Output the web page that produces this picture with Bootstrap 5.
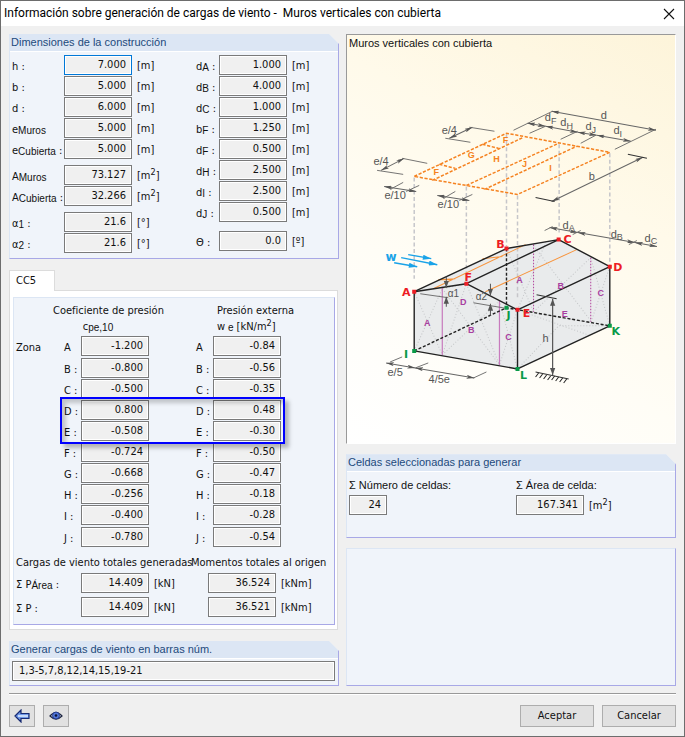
<!DOCTYPE html>
<html lang="es">
<head>
<meta charset="utf-8">
<meta name="viewport" content="width=device-width, initial-scale=1">
<title>Información sobre generación de cargas de viento</title>
<link href="https://cdn.jsdelivr.net/npm/bootstrap@5.3.0/dist/css/bootstrap.min.css" rel="stylesheet">
<style>
  :root { --ui: "DejaVu Sans Condensed", "DejaVu Sans", sans-serif; --head: "Liberation Sans", Arial, sans-serif; }
  body { background: #f0f0f0; color: #111; font-family: var(--ui); font-size: 11px; line-height: 16px; }
  .win { border: 1px solid #6d6d6d; }
  .title-bar { height: 25px; padding: 0 9px 0 3px; font: 12px/25px Roboto, sans-serif; color: #000; }
  .close-btn { width: 12px; height: 12px; line-height: 0; }
  .content-area { display: grid; grid-template-columns: 1fr 1fr; gap: 7px; padding: 8px 8px 7px; }
  .pane { background: #f0f4fa; border: 1px solid #dce6f4; border-right-color: #a8a8e6; border-bottom-color: #a8a8e6; }
  .pane.cut { clip-path: polygon(0 0, calc(100% - 10px) 0, 100% 10px, 100% 100%, 0 100%); }
  .pane-head { height: 17px; margin: 0; padding-left: 1px; background: #dce6f4; border-bottom: 1px solid #fff; font: 11px/15px var(--head); color: #1d4a7c; }
  .lines { display: grid; row-gap: 1px; align-content: start; }
  .line { display: flex; height: 20px; align-items: center; white-space: nowrap; }
  .line label { flex: none; width: 52px; padding-top: 3px; }
  .short .line label { width: 23px; }
  .zone .line label { width: 17px; }
  .total .line label { width: 65px; }
  .moment { padding-left: 2px; }
  .sb { font: 10px/12px var(--head); position: relative; top: 1px; }
  .num { flex: none; width: 68px; height: 20px; padding: 0 5px 1px 4px; border: 1px solid #7a7a7a; border-radius: 0; box-shadow: inset 0 0 0 1px #fff; background: #f0f0f0; color: #111; text-align: right; font: 11px/16px var(--ui); }
  .num.active { border-color: #0078d7; }
  .num.mini { width: 38px; }
  .num.full { width: 100%; padding-left: 6px; text-align: left; }
  .unit { margin-left: 5px; padding-top: 2px; }
  .unit sup, .hd sup { font-size: 9px; top: -4px; line-height: 0; }
  .set-b { margin-top: 5px; }
  .set-c { margin-top: 8px; }
  .dims { display: grid; grid-template-columns: 184px 1fr; padding: 3px 2px; min-height: 206px; }
  .bars { padding: 2px 3px 4px 2px; }
  .tab-cc { width: 46px; height: 21px; margin-bottom: -1px; border: 1px solid #dcdcdc; border-bottom: 0; background: #fff; font: 11px/18px var(--ui); color: #111; padding: 0 0 0 6px; text-align: left; position: relative; }
  .tab-area { padding-top: 11px; }
  .tab-body { background: #fff; border: 1px solid #dcdcdc; margin-right: 1px; padding: 6px 2px 4px 3px; }
  .tab-body .pane { padding: 5px 0 7px 2px; }
  .coef { display: grid; grid-template-columns: 48px 132px 1fr; }
  .zone .line:nth-child(2), .zone .line:last-child { margin-top: 1px; }
  .hd { height: 33px; line-height: 16px; white-space: nowrap; }
  .hd-coef { width: 90px; margin-left: -11px; text-align: center; }
  .hd-press { width: 80px; margin-left: 21px; }
  .zone-box { position: absolute; left: 46px; top: 99px; width: 225px; height: 47px; border: 2px solid #00f; box-shadow: 4px 4px 4px rgba(0,0,0,.25), inset 4px 4px 4px rgba(0,0,0,.2); pointer-events: none; }
  .totals { display: grid; grid-template-columns: 173px 1fr; margin-top: 6px; line-height: 20px; white-space: nowrap; }
  .totals .lines { row-gap: 4px; }
  .moment .lines { padding-left: 17px; }
  .scene { background: linear-gradient(30deg, #fff 0%, #fffdf6 35%, #fffaea 65%, #fdf4da 100%); border: 1px solid #999; border-right-color: #fff; border-bottom-color: #fff; }
  .scene h2 { font: 11px/16px var(--head); margin: 0; padding-left: 2px; }
  .below { margin-top: 10px; }
  .cells { display: grid; grid-template-columns: 167px 1fr; padding: 4px 2px; min-height: 65px; font-family: var(--head); }
  .cells .cap { display: block; line-height: 19px; }
  .cells .unit { font-family: var(--ui); }
  .foot { border-top: 1px solid #999; box-shadow: inset 0 1px #fff; margin: 0 8px; padding: 11px 0 9px; }
  .btn-win { height: 22px; border: 1px solid #adadad; border-radius: 0; background: #e1e1e1; color: #111; padding: 0; font: 11px/18px var(--ui); }
  .btn-win.wide { width: 74px; }
  .btn-win.tool { width: 26px; line-height: 0; }
</style>
<script src="https://cdn.jsdelivr.net/npm/bootstrap@5.3.0/dist/js/bootstrap.bundle.min.js"></script>
</head>
<body>
<div class="win d-flex flex-column min-vh-100">
  <header class="title-bar bg-white d-flex align-items-center justify-content-between">
    <span>Información sobre generación de cargas de viento -&nbsp; Muros verticales con cubierta</span>
    <button class="close-btn btn p-0 border-0" aria-label="Cerrar"><svg class="d-block" width="12" height="12" viewBox="0 0 12 12" stroke="#111" stroke-width="1.1"><path d="M1 1l10 10M11 1L1 11"/></svg></button>
  </header>

  <main class="content-area flex-grow-1">
    <div class="d-flex flex-column">
      <section class="pane cut">
        <h2 class="pane-head">Dimensiones de la construcción</h2>
        <div class="dims">
          <div class="lines">
            <div class="line"><label for="h">h :</label><input id="h" class="num active" value="7.000" readonly><span class="unit">[m]</span></div>
            <div class="line"><label for="b">b :</label><input id="b" class="num" value="5.000" readonly><span class="unit">[m]</span></div>
            <div class="line"><label for="d">d :</label><input id="d" class="num" value="6.000" readonly><span class="unit">[m]</span></div>
            <div class="line"><label for="em">e<span class="sb">Muros</span></label><input id="em" class="num" value="5.000" readonly><span class="unit">[m]</span></div>
            <div class="line"><label for="ec">e<span class="sb">Cubierta</span> :</label><input id="ec" class="num" value="5.000" readonly><span class="unit">[m]</span></div>
            <div class="line set-b"><label for="am">A<span class="sb">Muros</span></label><input id="am" class="num" value="73.127" readonly><span class="unit">[m<sup>2</sup>]</span></div>
            <div class="line"><label for="ac">A<span class="sb">Cubierta</span> :</label><input id="ac" class="num" value="32.266" readonly><span class="unit">[m<sup>2</sup>]</span></div>
            <div class="line set-b"><label for="a1">α<span class="sb">1</span> :</label><input id="a1" class="num" value="21.6" readonly><span class="unit">[°]</span></div>
            <div class="line"><label for="a2">α<span class="sb">2</span> :</label><input id="a2" class="num" value="21.6" readonly><span class="unit">[°]</span></div>
          </div>
          <div class="lines short">
            <div class="line"><label for="dA">d<span class="sb">A</span> :</label><input id="dA" class="num" value="1.000" readonly><span class="unit">[m]</span></div>
            <div class="line"><label for="dB">d<span class="sb">B</span> :</label><input id="dB" class="num" value="4.000" readonly><span class="unit">[m]</span></div>
            <div class="line"><label for="dC">d<span class="sb">C</span> :</label><input id="dC" class="num" value="1.000" readonly><span class="unit">[m]</span></div>
            <div class="line"><label for="bF">b<span class="sb">F</span> :</label><input id="bF" class="num" value="1.250" readonly><span class="unit">[m]</span></div>
            <div class="line"><label for="dF">d<span class="sb">F</span> :</label><input id="dF" class="num" value="0.500" readonly><span class="unit">[m]</span></div>
            <div class="line"><label for="dH">d<span class="sb">H</span> :</label><input id="dH" class="num" value="2.500" readonly><span class="unit">[m]</span></div>
            <div class="line"><label for="dI">d<span class="sb">I</span> :</label><input id="dI" class="num" value="2.500" readonly><span class="unit">[m]</span></div>
            <div class="line"><label for="dJ">d<span class="sb">J</span> :</label><input id="dJ" class="num" value="0.500" readonly><span class="unit">[m]</span></div>
            <div class="line set-c"><label for="th">Θ :</label><input id="th" class="num" value="0.0" readonly><span class="unit">[º]</span></div>
          </div>
        </div>
      </section>

      <div class="tab-area">
        <button class="tab-cc d-block" role="tab" aria-selected="true">CC5</button>
        <div class="tab-body">
          <section class="pane position-relative">
            <div class="coef">
              <div><div class="hd"></div><div class="line pt-1">Zona</div></div>
              <div>
                <div class="hd hd-coef">Coeficiente de presión<br>c<span class="sb">pe,10</span></div>
                <div class="lines zone">
                  <div class="line"><label for="cA">A</label><input id="cA" class="num" value="-1.200" readonly></div>
                  <div class="line"><label for="cB">B :</label><input id="cB" class="num" value="-0.800" readonly></div>
                  <div class="line"><label for="cC">C :</label><input id="cC" class="num" value="-0.500" readonly></div>
                  <div class="line"><label for="cD">D :</label><input id="cD" class="num" value="0.800" readonly></div>
                  <div class="line"><label for="cE">E :</label><input id="cE" class="num" value="-0.508" readonly></div>
                  <div class="line"><label for="cF">F :</label><input id="cF" class="num" value="-0.724" readonly></div>
                  <div class="line"><label for="cG">G :</label><input id="cG" class="num" value="-0.668" readonly></div>
                  <div class="line"><label for="cH">H :</label><input id="cH" class="num" value="-0.256" readonly></div>
                  <div class="line"><label for="cI">I :</label><input id="cI" class="num" value="-0.400" readonly></div>
                  <div class="line"><label for="cJ">J :</label><input id="cJ" class="num" value="-0.780" readonly></div>
                </div>
              </div>
              <div>
                <div class="hd hd-press">Presión externa<br>w<span class="sb"> e</span> [kN/m<sup>2</sup>]</div>
                <div class="lines zone">
                  <div class="line"><label for="wA">A</label><input id="wA" class="num" value="-0.84" readonly></div>
                  <div class="line"><label for="wB">B :</label><input id="wB" class="num" value="-0.56" readonly></div>
                  <div class="line"><label for="wC">C :</label><input id="wC" class="num" value="-0.35" readonly></div>
                  <div class="line"><label for="wD">D :</label><input id="wD" class="num" value="0.48" readonly></div>
                  <div class="line"><label for="wE">E :</label><input id="wE" class="num" value="-0.30" readonly></div>
                  <div class="line"><label for="wF">F :</label><input id="wF" class="num" value="-0.50" readonly></div>
                  <div class="line"><label for="wG">G :</label><input id="wG" class="num" value="-0.47" readonly></div>
                  <div class="line"><label for="wH">H :</label><input id="wH" class="num" value="-0.18" readonly></div>
                  <div class="line"><label for="wI">I :</label><input id="wI" class="num" value="-0.28" readonly></div>
                  <div class="line"><label for="wJ">J :</label><input id="wJ" class="num" value="-0.54" readonly></div>
                </div>
              </div>
            </div>
            <div class="zone-box"></div>
            <div class="totals">
              <div>
                <div>Cargas de viento totales generadas</div>
                <div class="lines total">
                  <div class="line"><label for="pa">Σ P<span class="sb">Área</span> :</label><input id="pa" class="num" value="14.409" readonly><span class="unit">[kN]</span></div>
                  <div class="line"><label for="pp">Σ P :</label><input id="pp" class="num" value="14.409" readonly><span class="unit">[kN]</span></div>
                </div>
              </div>
              <div class="moment">
                <div>Momentos totales al origen</div>
                <div class="lines">
                  <div class="line"><input class="num" aria-label="Momento área" value="36.524" readonly><span class="unit">[kNm]</span></div>
                  <div class="line"><input class="num" aria-label="Momento total" value="36.521" readonly><span class="unit">[kNm]</span></div>
                </div>
              </div>
            </div>
          </section>
        </div>
      </div>

      <section class="pane cut mt-auto">
        <h2 class="pane-head"><label for="bars">Generar cargas de viento en barras núm.</label></h2>
        <div class="bars d-flex"><input id="bars" class="num full flex-shrink-1" value="1,3-5,7,8,12,14,15,19-21" readonly></div>
      </section>
    </div>

    <div class="d-flex flex-column">
      <section class="scene">
        <h2>Muros verticales con cubierta</h2>
        <svg class="d-block w-100" viewBox="347 51 327 391" font-family="Liberation Sans, Arial, sans-serif" fill="none" role="img" aria-label="Esquema del edificio">
          <defs>
            <marker id="tip" viewBox="0 0 8 4" refX="8" refY="2" markerWidth="8" markerHeight="4" markerUnits="userSpaceOnUse" orient="auto-start-reverse"><path d="M0 0L8 2L0 4L2 2z" fill="#555"/></marker>
            <marker id="wind" viewBox="0 0 10 6" refX="10" refY="3" markerWidth="10" markerHeight="5" markerUnits="userSpaceOnUse" orient="auto"><path d="M0 0L10 3L0 6z" fill="#1aa3e8"/></marker>
            <marker id="thick" viewBox="0 0 8 6" refX="8" refY="3" markerWidth="7" markerHeight="6" markerUnits="userSpaceOnUse" orient="auto-start-reverse"><path d="M0 0L8 3L0 6z" fill="#555"/></marker>
          </defs>

          <!-- building faces -->
          <path d="M414 291L506 248L558 239L609 266V325L517 368L414 350z" fill="#e9ebec"/>
          <!-- bracing diagonals -->
          <path d="M414 350L442 288L466 283L499 364M414 291L442 354L466 283M442 354L499 300M442 288L499 364L517 309M499 300L517 368M517 309L590 322L609 266M590 257L609 325M533 245L590 320M533 311L590 257M517 309L545 242M506 248L533 311M517 368L558 325L609 325M517 309L590 335" stroke="#c4c6c8" stroke-width="1" stroke-dasharray="1 2"/>
          <!-- projection lines -->
          <path d="M414 177V278M466 186V280M506 134V246M517 195V298M558.5 144V232M609 153V264" stroke="#c6c6ca" stroke-width="1.5" stroke-dasharray="4 2.5"/>

          <!-- roof plan -->
          <g stroke="#f58220" stroke-width="1.5" stroke-dasharray="3.2 1.6">
            <path d="M414 176L506 133L609 152L517 194z"/>
            <path d="M432 180L523 137M466 185L558 143M484 189L576 146M439 164L455 168M482 144L498 148"/>
          </g>
          <g fill="#f58220" font-size="9" font-weight="bold" text-anchor="middle">
            <text x="436" y="175">F</text><text x="471" y="158">G</text><text x="496" y="162">H</text><text x="505" y="143">F</text><text x="524" y="167">J</text><text x="550" y="171">I</text>
          </g>

          <!-- orange roof traces and wall zones -->
          <path d="M433 288L525 244M485 291L576 249M438 279H452M438 279L455 278M482 258L502 256" stroke="#f7943d"/>
          <path d="M442 286V354M499 300V364" stroke="#c77bbd" stroke-width="1.2"/>
          <path d="M533 244V311M590 257V321" stroke="#b0409b" stroke-dasharray="1.5 1.5"/>

          <!-- building edges -->
          <g stroke="#222" stroke-width="1.4" stroke-linejoin="round">
            <path d="M414 291L506 248L558 239L609 266V325L517 368L414 350z"/>
            <path d="M414 291L466 283L517 309V368M466 283L558 239M517 309L609 266"/>
            <path d="M414 350L506 307L609 325M506 248V307" stroke-dasharray="3 1.8"/>
          </g>

          <!-- dimension lines -->
          <g stroke="#666" stroke-width="1" marker-start="url(#tip)" marker-end="url(#tip)">
            <path d="M449 138L472 127"/><path d="M381 170L404 158"/><path d="M384 186L416 191"/><path d="M437 195L469 200"/>
            <path d="M551 111L655 130"/><path d="M527 123L545 126"/><path d="M545 126L577 132"/><path d="M577 132L596 135"/><path d="M596 135L630 141"/>
            <path d="M551 201L642 157"/><path d="M549 227L577 232"/><path d="M577 232L634 242"/><path d="M634 242L656 246"/>
            <path d="M386 362L415 367"/><path d="M415 367L474 377"/>
          </g>
          <path d="M469 127L494 131M445 138L470 142M402 158L427 163M377 170L403 174M390 189L403 182M406 191L419 185M443 198L455 191M459 200L472 194M513 130L552 111M614 149L655 129M529 133L545 126M560 139L577 131M580 143L595 135M544 230L552 226M572 234L580 230M628 244L636 240M390 361L402 356M415 367L428 362M473 377L486 371M420 293L448 297M473 302L508 308" stroke="#666" stroke-width=".9"/>
          <path d="M535 197L554 201M627 154L646 158M536 294L556 298M535 371L568 378" stroke="#333"/>
          <path d="M538 372l-3 4M542 373l-3 4M546 374l-3 4M550 375l-3 4M554 375l-3 4M558 376l-3 4M562 377l-3 4M566 378l-3 4" stroke="#222"/>
          <path d="M552 298V374" stroke="#555" stroke-width="1.2" marker-start="url(#thick)" marker-end="url(#thick)"/>
          <g stroke="#555" marker-end="url(#thick)"><path d="M446 276V287"/><path d="M446 306V296"/><path d="M490 283V295"/><path d="M490 315V303"/></g>

          <g fill="#555" font-size="11" text-anchor="middle">
            <text x="449" y="134">e/4</text><text x="381" y="165">e/4</text><text x="395" y="199">e/10</text><text x="448" y="208">e/10</text>
            <text x="603" y="119">d</text>
            <text x="550" y="121">d<tspan font-size="9" dy="3">F</tspan></text>
            <text x="566" y="126">d<tspan font-size="9" dy="3">H</tspan></text>
            <text x="590" y="130">d<tspan font-size="9" dy="3">J</tspan></text>
            <text x="617" y="134">d<tspan font-size="9" dy="3">I</tspan></text>
            <text x="591" y="180">b</text>
            <text x="568" y="228">d<tspan font-size="9" dy="2">A</tspan></text>
            <text x="616" y="237">d<tspan font-size="9" dy="2">B</tspan></text>
            <text x="650" y="241">d<tspan font-size="9" dy="2">C</tspan></text>
            <text x="395" y="375">e/5</text><text x="439" y="382">4/5e</text><text x="545" y="341">h</text>
            <text x="453" y="296" font-size="10">α1</text><text x="481" y="299" font-size="10">α2</text>
          </g>

          <g fill="#a83fa0" font-size="9" font-weight="bold" text-anchor="middle">
            <text x="427" y="325">A</text><text x="463" y="304">D</text><text x="471" y="332">B</text><text x="508" y="339">C</text><text x="519" y="282">A</text><text x="560" y="288">B</text><text x="600" y="295">C</text><text x="564" y="316">E</text>
          </g>

          <path d="M412 289h4v4h-4zM504 246h4v4h-4zM556 237h4v4h-4zM607 264h4v4h-4zM515 307h4v4h-4zM464 281h4v4h-4z" fill="#ed1c24"/>
          <path d="M412 348h4v4h-4zM504 305h4v4h-4zM607 323h4v4h-4zM515 366h4v4h-4z" fill="#0a9a48"/>
          <g font-family="DejaVu Sans, sans-serif" font-size="11" font-weight="bold" text-anchor="middle">
            <g fill="#ed1c24"><text x="406" y="295">A</text><text x="500" y="247">B</text><text x="567" y="242">C</text><text x="617" y="270">D</text><text x="526" y="316">E</text><text x="468" y="280">F</text></g>
            <g fill="#0a9a48"><text x="406" y="357">I</text><text x="508" y="318">J</text><text x="615" y="334">K</text><text x="523" y="378">L</text></g>
            <text x="391" y="260" font-size="12" fill="#1aa3e8">w</text>
          </g>
          <g stroke="#1aa3e8" stroke-width="1.5" marker-end="url(#wind)"><path d="M408 254L431 258"/><path d="M401 257L437 264"/><path d="M394 262L417 266"/></g>
        </svg>
      </section>

      <section class="pane cut below">
        <h2 class="pane-head">Celdas seleccionadas para generar</h2>
        <div class="cells">
          <div><label class="cap" for="nc">Σ Número de celdas:</label><div class="line"><input id="nc" class="num mini" value="24" readonly></div></div>
          <div><label class="cap" for="ar">Σ Área de celda:</label><div class="line"><input id="ar" class="num" value="167.341" readonly><span class="unit">[m<sup>2</sup>]</span></div></div>
        </div>
      </section>
      <section class="pane flex-grow-1 below"></section>
    </div>
  </main>

  <footer class="foot d-flex align-items-center">
    <button class="btn-win tool" aria-label="Atrás"><svg width="16" height="14" viewBox="0 0 16 14"><path d="M1 7L7 1V4.500H15V9.500H7V13z" fill="#6f98e8" stroke="#172a72" stroke-width="1.200"/><path d="M4 7h10" stroke="#e6f2ff" stroke-width="1.500"/></svg></button>
    <button class="btn-win tool ms-2" aria-label="Ver"><svg width="14" height="12" viewBox="0 0 14 12"><path d="M1 6Q7-1 13 6Q7 12 1 6z" fill="#dfe6f5" stroke="#1d2540" stroke-width="1.200"/><circle cx="7" cy="5.500" r="3.500" fill="#4f74d8" stroke="#233a8c"/><circle cx="7" cy="5.500" r="1.300" fill="#0b1336"/></svg></button>
    <button class="btn-win wide ms-auto">Aceptar</button>
    <button class="btn-win wide ms-2">Cancelar</button>
  </footer>
</div>
</body>
</html>
